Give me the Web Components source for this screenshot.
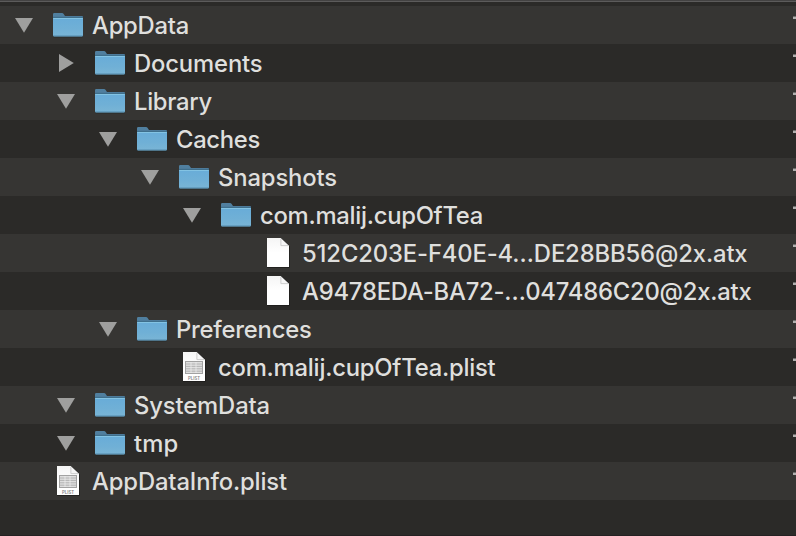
<!DOCTYPE html>
<html lang="en"><head><meta charset="utf-8"><title>AppData</title>
<style>html,body{margin:0;height:100%;overflow:hidden;background:#2b2a28}</style></head>
<body>
<file-outline>
<file-row level="0" kind="folder" state="open" fit="97">AppData</file-row>
<file-row level="1" kind="folder" state="closed" fit="128.5">Documents</file-row>
<file-row level="1" kind="folder" state="open" fit="78">Library</file-row>
<file-row level="2" kind="folder" state="open" fit="84">Caches</file-row>
<file-row level="3" kind="folder" state="open" fit="119">Snapshots</file-row>
<file-row level="4" kind="folder" state="open" fit="223">com.malij.cupOfTea</file-row>
<file-row level="5" kind="file" fit="445.5">512C203E-F40E-4…DE28BB56@2x.atx</file-row>
<file-row level="5" kind="file" fit="449.5">A9478EDA-BA72-…047486C20@2x.atx</file-row>
<file-row level="2" kind="folder" state="open" fit="135.5">Preferences</file-row>
<file-row level="3" kind="plist" fit="277.5">com.malij.cupOfTea.plist</file-row>
<file-row level="1" kind="folder" state="open" fit="136">SystemData</file-row>
<file-row level="1" kind="folder" state="open" fit="44.5">tmp</file-row>
<file-row level="0" kind="plist" fit="195">AppDataInfo.plist</file-row>
</file-outline>
<script>
class FileIcon extends HTMLElement {
  connectedCallback() {
    const kind = this.getAttribute('kind');
    const page = `<path d="M5 33.5H27.4V12" fill="none" stroke="#191817" stroke-width="1" opacity=".65"/>
      <path d="M5 4H18.5L27 12V33H5Z" fill="url(#p)"/>
      <path d="M18.5 4L27 12H18.5Z" fill="#f6f6f6"/><path d="M18.9 5V11.6H26" fill="none" stroke="#c8c8c8" stroke-width=".9"/>`;
    const art = {
      folder: `<path d="M1 10V8.2Q1 7 2.2 7H10Q11 7 11.7 8L12.6 9.4Q13 10 14 10H30Q31 10 31 11V15H1Z" fill="#507f9f"/>
        <path d="M1.5 30.7H30.5" stroke="#191b1d" stroke-width="1"/>
        <path d="M1 11.6H31V29.3Q31 30.4 29.9 30.4H2.1Q1 30.4 1 29.3Z" fill="url(#f)"/>
        <path d="M1 11.4H31" stroke="#396580" stroke-width=".9"/><path d="M1.3 12.5H30.7" stroke="#83c3e3" stroke-width="1"/>
        <path d="M1.2 29.8H30.8" stroke="#5b94b5" stroke-width=".9"/>`,
      file: page,
      plist: page + `<rect x="7.5" y="13.5" width="17" height="12" fill="#dedede" stroke="#a2a2a2"/>
        <path d="M8 16H24M8 18.4H24M8 20.8H24M8 23.2H24" stroke="#a8a8a8" stroke-width=".8"/><path d="M13 14V25M18 14V25" stroke="#f0f0f0" stroke-width=".7"/>
        <text x="16" y="31.9" text-anchor="middle" textLength="12" lengthAdjust="spacingAndGlyphs" font-family="Inter,sans-serif" font-weight="600" font-size="4.8" fill="#858585">PLIST</text>`
    }[kind];
    this.attachShadow({mode:'open'}).innerHTML = `<style>:host{display:block;width:32px;height:38px}svg{display:block}</style>
      <svg width="32" height="38" viewBox="0 0 32 38"><defs>
      <linearGradient id="f" x1="0" y1="0" x2="0" y2="1"><stop stop-color="#68acd8"/><stop offset=".6" stop-color="#70b0d6"/><stop offset="1" stop-color="#7ab5d5"/></linearGradient>
      <linearGradient id="p" x1="0" y1="0" x2="0" y2="1"><stop stop-color="#f5f5f5"/><stop offset=".5" stop-color="#fff"/></linearGradient></defs>${art}</svg>`;
  }
}
customElements.define('file-icon', FileIcon);

class DisclosureArrow extends HTMLElement {
  connectedCallback() {
    const d = {open:'M15 12H33L24 26.8Z', closed:'M17 10V28L31.8 19Z'}[this.getAttribute('state')];
    this.attachShadow({mode:'open'}).innerHTML = `<style>:host{display:block;width:52px;height:38px}svg{display:block}</style>
      <svg width="52" height="38">${d ? `<path d="${d}" fill="#9f9f9e"/>` : ''}</svg>`;
  }
}
customElements.define('disclosure-arrow', DisclosureArrow);

class FileRow extends HTMLElement {
  connectedCallback() {
    const root = this.attachShadow({mode:'open'});
    root.innerHTML = `<style>
      :host{display:flex;height:38px;box-sizing:border-box;overflow:hidden;background:#2b2a28}
      :host(:nth-child(odd)){background:#363533}
      .name{margin-left:8px;font:500 23.8px/38px Inter,"Liberation Sans",sans-serif;color:#dfdfdd;white-space:pre;font-kerning:normal;padding-top:1px}
      .date{margin-left:auto;margin-top:10px;width:3px;height:3px;background:linear-gradient(#6e6d6c 1px,#b0afae 1px)}
      </style><disclosure-arrow state="${this.getAttribute('state') || ''}"></disclosure-arrow>
      <file-icon kind="${this.getAttribute('kind')}"></file-icon><span class="name"><slot></slot></span><i class="date"></i>`;
    this.style.paddingLeft = this.getAttribute('level') * 42 + 'px';
    const name = root.querySelector('.name');
    const spare = this.getAttribute('fit') - name.getBoundingClientRect().width;
    name.style.letterSpacing = spare / this.textContent.length + 'px';
  }
}
customElements.define('file-row', FileRow);

class FileOutline extends HTMLElement {
  connectedCallback() {
    this.attachShadow({mode:'open'}).innerHTML = `<style>
      :host{display:flex;flex-direction:column;box-sizing:border-box;height:536px;background:#2b2a28;border-bottom:1px solid #242122}
      .edge{height:2px;margin-bottom:4px;background:linear-gradient(#434242 1px,#5c5b5b 1px)}
      </style><div class="edge"></div><slot></slot>`;
  }
}
customElements.define('file-outline', FileOutline);
</script>
</body></html>
